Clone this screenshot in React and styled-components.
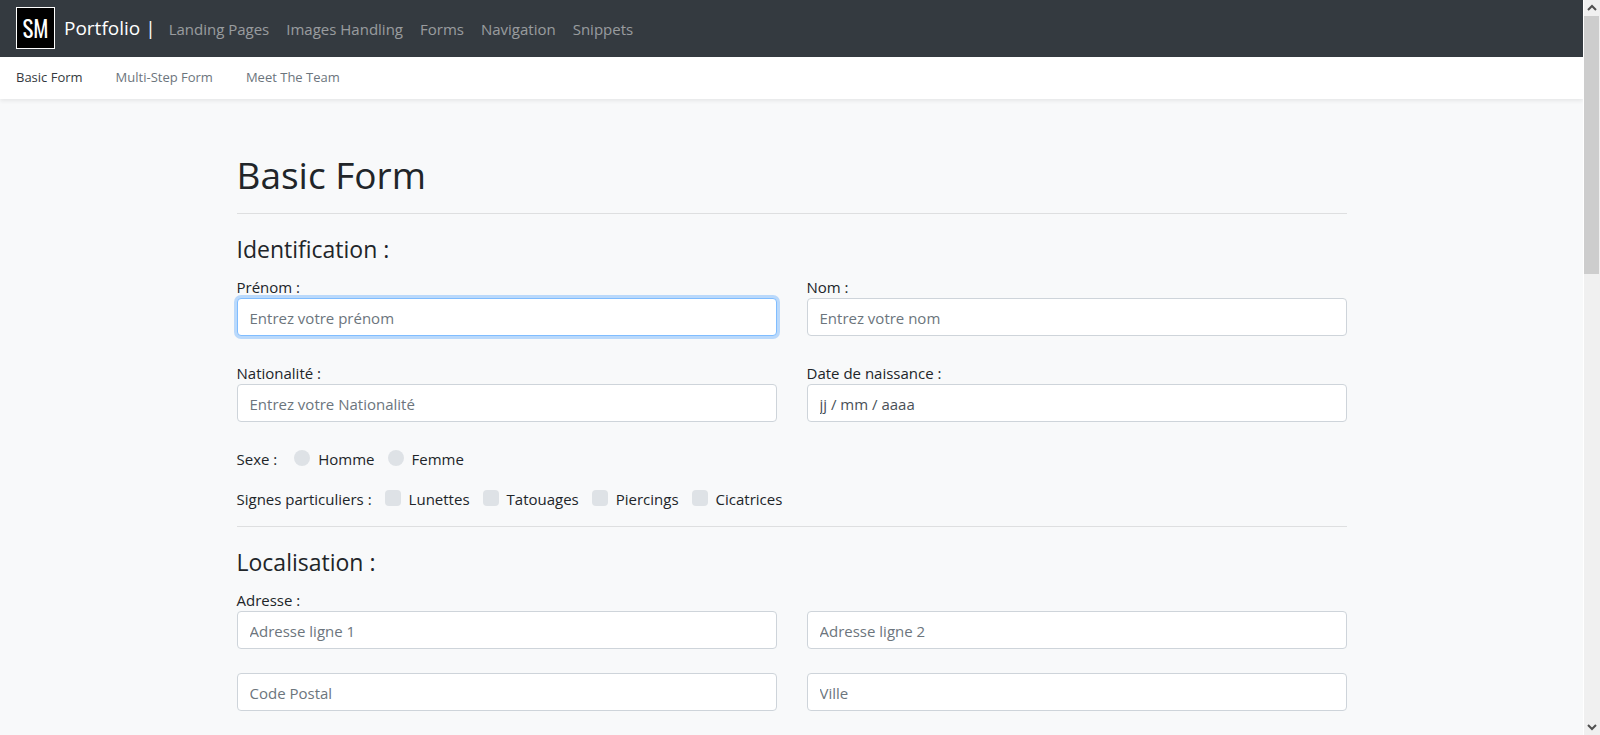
import { useState } from 'react';
import styled, { createGlobalStyle } from 'styled-components';

const GlobalStyle = createGlobalStyle`
    *, *::before, *::after {
        box-sizing: border-box;
    }

    body {
        margin: 0;
        background: #f8f9fa;
        color: #212529;
        font-family: "Open Sans", "Noto Sans", sans-serif;
        font-size: 15px;
        line-height: 24px;
    }
`;

const Shell = styled.div`
    display: flex;
    height: 100vh;
`;

const Page = styled.div`
    flex: 1;
    min-width: 0;
    overflow-y: auto;
    scrollbar-width: none;
`;

const Navbar = styled.header`
    display: flex;
    align-items: center;
    padding: 7px 16px 8px;
    background: #343a40;
    line-height: 26px;
`;

const Brand = styled.a`
    display: flex;
    align-items: center;
    margin-right: 13px;
    color: white;
    font-size: 19px;
    text-decoration: none;
`;

const Logo = styled.span`
    display: flex;
    align-items: center;
    justify-content: center;
    width: 39px;
    height: 42px;
    margin-right: 9px;
    border: 1px solid white;
    background: black;
    font-family: "Oswald", "Roboto Condensed", Roboto, sans-serif;
    font-size: 23px;
    font-weight: 400;
`;

const NavLinks = styled.nav`
    display: flex;
    gap: 17px;
    padding-top: 2px;
`;

const NavLink = styled.a`
    color: rgba(255, 255, 255, 0.5);
    text-decoration: none;
`;

const SubNav = styled.nav`
    display: flex;
    gap: 33px;
    padding: 8px 16px 10px;
    background: white;
    box-shadow: 0 2px 4px rgba(0, 0, 0, 0.075);
`;

const SubLink = styled.a`
    color: ${(props) => (props.$active ? '#343a40' : '#6c757d')};
    font-size: 13px;
    text-decoration: none;
`;

const Main = styled.main`
    max-width: 1140px;
    margin: 0 auto;
    padding: 50px 15px;
`;

const Title = styled.h1`
    height: 48px;
    margin: 0;
    font-size: 37px;
    font-weight: 400;
    line-height: 52px;
`;

const Divider = styled.hr`
    margin: 16px 0;
    border: 0;
    border-top: 1px solid rgba(0, 0, 0, 0.1);
`;

const Section = styled.fieldset`
    min-width: 0;
    margin: 0;
    padding: 0;
    border: 0;
`;

const SectionTitle = styled.legend`
    height: 36px;
    margin-bottom: 8px;
    padding: 0;
    font-size: 23px;
    line-height: 38px;
`;

const Fields = styled.div`
    display: grid;
    grid-template-columns: 1fr 1fr;
    gap: 24px 30px;
    align-items: end;
`;

const Field = styled.div`
    display: flex;
    flex-direction: column;
`;

const Label = styled.label`
    height: 24px;
    line-height: 26px;
`;

const Input = styled.input`
    width: 100%;
    height: 38px;
    padding: 7px 12px 5px;
    border: 1px solid #ced4da;
    border-radius: 4px;
    background: white;
    color: #495057;
    font: inherit;

    &::placeholder {
        color: ${(props) => (props.$date ? '#495057' : '#6c757d')};
        opacity: 1;
    }

    &:focus {
        border-color: #80bdff;
        outline: 0;
        box-shadow: 0 0 0 3px rgba(0, 123, 255, 0.25);
    }

    &:focus:placeholder-shown {
        caret-color: transparent;
    }
`;

const Choices = styled.div`
    display: flex;
    gap: 13px;
    height: 24px;
    margin-top: ${(props) => props.$top}px;
    line-height: 26px;
`;

const Prompt = styled.span`
    margin-right: ${(props) => (props.$wide ? '4px' : '0')};
`;

const Choice = styled.label`
    display: flex;
    gap: 8px;
`;

const Tick = styled.input`
    appearance: none;
    width: 16px;
    height: 16px;
    margin: 4px 0 0;
    border-radius: ${(props) => (props.type === 'radio' ? '50%' : '4px')};
    background: #dee2e6;

    &:checked {
        background: #007bff;
    }
`;

const ScrollBar = styled.div`
    display: flex;
    flex-direction: column;
    width: 17px;
    border-left: 1px solid white;
    background: #f0f0f0;
`;

const Arrow = styled.svg`
    width: 16px;
    height: 16px;
    fill: none;
    stroke: #505050;
    stroke-width: 2;
`;

const Track = styled.div`
    flex: 1;
    padding-right: 1px;
`;

const Thumb = styled.div`
    height: calc(100% * 11 / 30);
    background: #cdcdcd;
`;

const links = ['Landing Pages', 'Images Handling', 'Forms', 'Navigation', 'Snippets'];
const subLinks = ['Basic Form', 'Multi-Step Form', 'Meet The Team'];
const signs = ['Lunettes', 'Tatouages', 'Piercings', 'Cicatrices'];

const TextField = ({ id, label, ...rest }) => (
    <Field>
        {label && <Label htmlFor={id}>{label}</Label>}
        <Input id={id} name={id} type="text" aria-label={label ? undefined : rest.placeholder} {...rest} />
    </Field>
);

const App = () => {
    const [active, setActive] = useState('Basic Form');

    return (
        <Shell>
            <GlobalStyle />
            <Page>
                <Navbar>
                    <Brand href="#">
                        <Logo>SM</Logo>
                        Portfolio |
                    </Brand>
                    <NavLinks>
                        {links.map((link) => <NavLink key={link} href="#">{link}</NavLink>)}
                    </NavLinks>
                </Navbar>
                <SubNav>
                    {subLinks.map((link) => (
                        <SubLink key={link} href="#" $active={link === active} onClick={() => setActive(link)}>
                            {link}
                        </SubLink>
                    ))}
                </SubNav>
                <Main>
                    <Title>Basic Form</Title>
                    <Divider />
                    <form>
                        <Section>
                            <SectionTitle>Identification :</SectionTitle>
                            <Fields>
                                <TextField id="prenom" label="Prénom :" placeholder="Entrez votre prénom" autoFocus />
                                <TextField id="nom" label="Nom :" placeholder="Entrez votre nom" />
                                <TextField id="nationalite" label="Nationalité :" placeholder="Entrez votre Nationalité" />
                                <TextField id="naissance" label="Date de naissance :" placeholder="jj / mm / aaaa" $date />
                            </Fields>
                            <Choices $top={24} role="radiogroup" aria-labelledby="sexe">
                                <Prompt id="sexe" $wide>Sexe :</Prompt>
                                <Choice><Tick type="radio" name="sexe" value="homme" />Homme</Choice>
                                <Choice><Tick type="radio" name="sexe" value="femme" />Femme</Choice>
                            </Choices>
                            <Choices $top={16} role="group" aria-labelledby="signes">
                                <Prompt id="signes">Signes particuliers :</Prompt>
                                {signs.map((sign) => (
                                    <Choice key={sign}><Tick type="checkbox" name={sign} />{sign}</Choice>
                                ))}
                            </Choices>
                        </Section>
                        <Divider />
                        <Section>
                            <SectionTitle>Localisation :</SectionTitle>
                            <Fields>
                                <TextField id="adresse1" label="Adresse :" placeholder="Adresse ligne 1" />
                                <TextField id="adresse2" placeholder="Adresse ligne 2" />
                                <TextField id="codePostal" placeholder="Code Postal" />
                                <TextField id="ville" placeholder="Ville" />
                            </Fields>
                        </Section>
                    </form>
                </Main>
            </Page>
            <ScrollBar aria-hidden="true">
                <Arrow viewBox="0 0 16 16"><path d="M4 10l4-4 4 4" /></Arrow>
                <Track><Thumb /></Track>
                <Arrow viewBox="0 0 16 16"><path d="M4 6l4 4 4-4" /></Arrow>
            </ScrollBar>
        </Shell>
    );
};

export default App;
